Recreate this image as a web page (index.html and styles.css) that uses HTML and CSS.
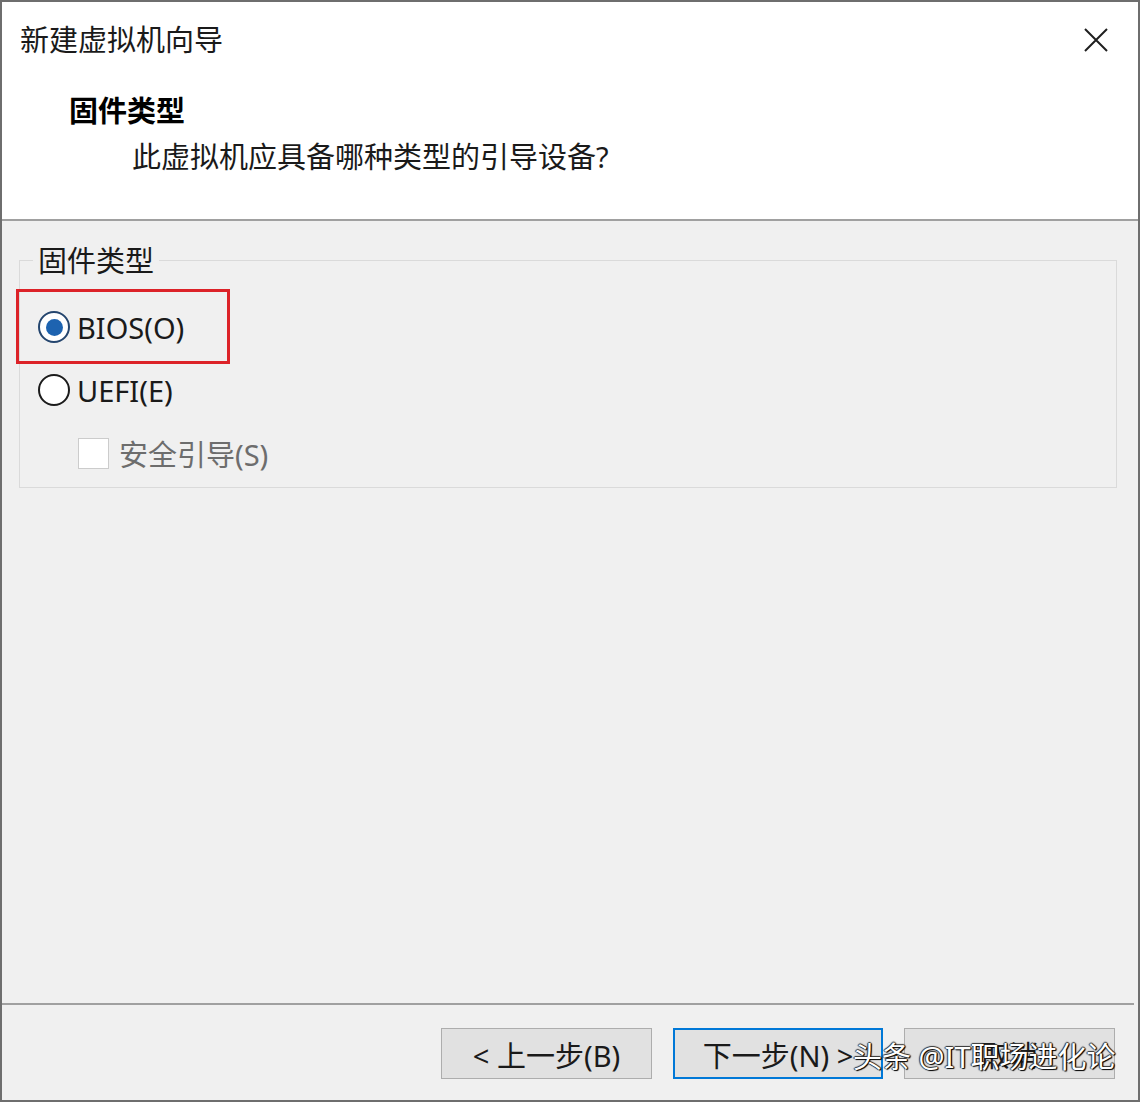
FILE: index.html
```html
<!DOCTYPE html>
<html lang="zh-CN">
<head>
  <meta charset="UTF-8">
  <meta name="viewport" content="width=device-width, initial-scale=1.0">
  <title>新建虚拟机向导</title>
  <link rel="stylesheet" href="styles.css">
</head>
<body>
  <div class="window">
    <div class="header">
      <div class="title-row">
        <div class="title">新建虚拟机向导</div>
        <button class="close" aria-label="关闭">
          <svg width="24" height="24" viewBox="0 0 24 24"><path d="M1 1L23 23M23 1L1 23" stroke="#1f1f1f" stroke-width="2" fill="none"/></svg>
        </button>
      </div>
      <h1>固件类型</h1>
      <p class="subtitle">此虚拟机应具备哪种类型的引导设备?</p>
    </div>

    <div class="main">
      <fieldset class="group">
        <legend>固件类型</legend>
        <div class="row">
          <span class="radio checked"></span>
          <span class="label">BIOS(O)</span>
          <span class="mark"></span>
        </div>
        <div class="row">
          <span class="radio"></span>
          <span class="label">UEFI(E)</span>
        </div>
        <div class="row sub">
          <span class="checkbox"></span>
          <span class="label disabled">安全引导(S)</span>
        </div>
      </fieldset>
    </div>

    <div class="sep"></div>
    <div class="footer">
      <button class="btn">&lt; 上一步(B)</button>
      <button class="btn default">下一步(N) &gt;</button>
      <button class="btn">取消</button>
    </div>

    <div class="watermark">头条 @IT职场进化论</div>
  </div>
</body>
</html>
```

FILE: styles.css
```css
body {
  margin: 0;
  font-family: "Noto Sans", "Noto Sans CJK SC", sans-serif;
  color: #1a1a1a;
}
.window {
  position: relative;
  width: 1140px; height: 1102px;
  box-sizing: border-box;
  border: 2px solid #6e6e6e;
  background: #f0f0f0;
  display: flex; flex-direction: column;
  overflow: hidden;
}
.header {
  height: 219px;
  box-sizing: border-box;
  background: #fff;
  border-bottom: 2px solid #a0a0a0;
  padding: 20px 0 0 18px;
  flex-shrink: 0;
}
.title-row { display: flex; justify-content: space-between; align-items: center; }
.title { font-size: 29px; line-height: 35px; }
.close {
  border: none; background: none; padding: 0;
  width: 24px; height: 24px; margin-right: 30px;
  display: flex;
}
h1 {
  margin: 36px 0 0 49px;
  font-size: 29px; line-height: 35px; font-weight: bold; color: #000;
}
.subtitle {
  margin: 11px 0 0 112px;
  font-size: 29px; line-height: 35px;
}
.main { flex: 1; }
.group {
  margin: 22px 21px 0 17px;
  padding: 18px 0 3px 18px;
  border: 1px solid #dadada;
}
.group legend {
  margin-left: -5px;
  padding: 0 5px;
  font-size: 29px; line-height: 35px;
}
.row {
  position: relative;
  height: 62px;
  display: flex; align-items: center; gap: 7px;
  font-size: 29px;
}
.row + .row { margin-top: 1px; }
.radio {
  width: 32px; height: 32px;
  box-sizing: border-box;
  border: 2px solid #1b1b1b;
  border-radius: 50%;
  background: #fff;
  display: flex; align-items: center; justify-content: center;
}
.radio.checked { border-color: #24456e; }
.radio.checked::after {
  content: "";
  width: 17px; height: 17px;
  border-radius: 50%;
  background: #1d63b0;
}
.sub { padding-left: 40px; gap: 10px; }
.checkbox {
  width: 31px; height: 31px;
  box-sizing: border-box;
  border: 1px solid #cccccc;
  background: #fff;
}
.disabled { color: #6d6d6d; }
.mark {
  position: absolute;
  left: -22px; top: -7px;
  width: 214px; height: 75px;
  box-sizing: border-box;
  border: 3px solid #dc2228;
}
.sep {
  height: 2px;
  margin-right: 4px;
  background: #a0a0a0;
}
.footer {
  display: flex; justify-content: flex-end; gap: 21px;
  padding: 23px 23px 21px 0;
}
.btn {
  width: 211px; height: 51px;
  box-sizing: border-box;
  border: 1px solid #adadad;
  background: #e1e1e1;
  font-family: inherit;
  font-size: 29px; color: #1a1a1a;
  padding: 0;
}
.btn.default { border: 2px solid #0078d7; width: 210px; }
.watermark {
  position: absolute;
  left: 851px; top: 1037px;
  font-size: 29px; line-height: 35px;
  color: #fff;
  text-shadow: 1px 1px 1px #000, -1px 0 1px #333, 0 -1px 1px #333, 1px 0 1px #000;
  white-space: nowrap;
}
```
